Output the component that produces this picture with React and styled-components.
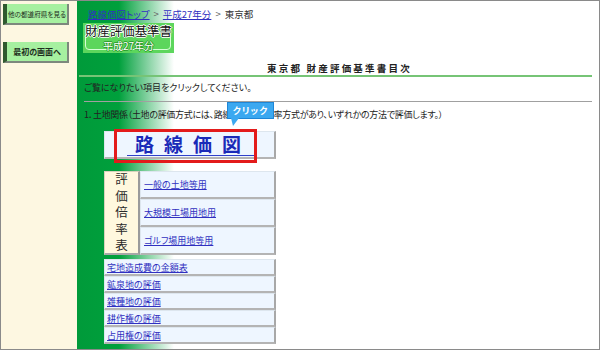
import React from 'react';
import styled, { createGlobalStyle } from 'styled-components';

const GlobalStyle = createGlobalStyle`
  body {
    margin: 0;
    background: #fff;
    font-family: "Noto Sans CJK JP", "Noto Sans", sans-serif;
    font-feature-settings: "palt";
  }
`;

const Frame = styled.div`
  width: 600px;
  height: 350px;
  box-sizing: border-box;
  border: 1px solid #8a8a8a;
  display: flex;
  overflow: hidden;
`;

const Sidebar = styled.div`
  width: 76px;
  background: #fdf7e1;
  display: flex;
  flex-direction: column;
  align-items: flex-start;
  padding: 3px 0 0 2px;
  box-sizing: border-box;
`;

const SideButton = styled.div`
  width: 66px;
  height: 21px;
  box-sizing: border-box;
  margin-top: ${({ $gap }) => $gap || 0}px;
  background: #a6f0a0;
  border-left: 4px solid #2f5a2f;
  border-right: 2px solid #7d887d;
  border-bottom: 2px solid #7d887d;
  display: flex;
  align-items: center;
  justify-content: center;
  color: #1e2e1e;
  font-size: ${({ $size }) => $size}px;
  font-weight: ${({ $bold }) => ($bold ? 700 : 400)};
  white-space: nowrap;
`;

const Main = styled.div`
  flex: 1;
  background: linear-gradient(90deg, #009a3a 0px, #00a03c 42px, #ffffff 97px);
  padding: 0 7px 0 0;
  display: flex;
  flex-direction: column;
  font-size: 9px;
  color: #222;
`;

const Crumbs = styled.div`
  margin: 6px 0 0 11px;
  height: 14px;
  line-height: 14px;
  font-size: 9.5px;
  color: #333;
  display: flex;
  gap: 4px;
`;

const Link = styled.a`
  color: #3030c0;
  text-decoration: underline;
  font-size: ${({ $size }) => $size || 9}px;
  cursor: pointer;
  white-space: nowrap;
`;

const Sep = styled.span`
  color: #666;
`;

const TitleBadge = styled.div`
  margin: 2px 0 0 6px;
  width: 91px;
  height: 30px;
  background: #5cd65c;
  position: relative;
  display: flex;
  flex-direction: column;
  align-items: center;
`;

const TitleFrame = styled.div`
  position: absolute;
  left: 2px;
  right: 3px;
  top: 9px;
  height: 16px;
  border: 1px solid #d6ffd6;
  border-radius: 4px;
`;

const TitleMain = styled.div`
  position: relative;
  font-size: 12.4px;
  line-height: 17px;
  white-space: nowrap;
  color: #111;
  text-shadow: 1px 0 0 #fff, -1px 0 0 #fff, 0 1px 0 #fff, 0 -1px 0 #fff;
`;

const TitleSub = styled.div`
  position: relative;
  font-size: 10px;
  line-height: 11px;
  color: #fff;
  white-space: nowrap;
  text-shadow: 1px 0 0 #2a9a2a, -1px 0 0 #2a9a2a, 0 1px 0 #2a9a2a, 0 -1px 0 #2a9a2a;
`;

const Heading = styled.div`
  margin: 8px 0 0 2px;
  height: 14px;
  line-height: 14px;
  border-bottom: 2px solid #76c476;
  text-align: center;
  font-size: 9.5px;
  font-weight: 700;
  letter-spacing: 2.2px;
  color: #222;
  padding-left: 8px;
`;

const Text = styled.div`
  margin: ${({ $top }) => $top}px 0 0 7px;
  line-height: 14px;
  position: relative;
  white-space: nowrap;
  letter-spacing: ${({ $tight }) => ($tight ? '-0.3px' : 'normal')};
`;

const Rule = styled.div`
  margin: 6px 0 0 7px;
  height: 1px;
  background: #a0a0a0;
`;

const Bubble = styled.div`
  position: absolute;
  left: 143px;
  top: -6px;
  width: 47px;
  height: 17px;
  box-sizing: border-box;
  background: #3ba8f0;
  border: 1px solid #1e86d6;
  color: #fff;
  font-weight: 700;
  font-size: 9px;
  letter-spacing: 1px;
  display: flex;
  align-items: center;
  justify-content: center;

  &::after {
    content: '';
    position: absolute;
    left: 3px;
    bottom: -8px;
    border-top: 8px solid #3ba8f0;
    border-right: 6px solid transparent;
    border-left: 2px solid transparent;
  }
`;

const Block = styled.div`
  margin: ${({ $top }) => $top}px 0 0 27px;
  width: 172px;
`;

const MapBox = styled.div`
  position: relative;
  height: 28px;
  box-sizing: border-box;
  background: #eef6ff;
  border: 1px solid #dde6ee;
  border-right: 2px solid #a8a8a8;
  border-bottom: 2px solid #b4b4b4;
`;

const MapLink = styled.a`
  position: absolute;
  left: 22px;
  top: 1px;
  padding: 0 3px 0 8px;
  font-size: 19px;
  line-height: 22px;
  font-weight: 700;
  letter-spacing: 10px;
  color: #1a2ab8;
  border-bottom: 1px solid #3040c8;
`;

const Highlight = styled.div`
  position: absolute;
  left: 9px;
  top: -3px;
  width: 143px;
  height: 34px;
  box-sizing: border-box;
  border: 3px solid #e31b1b;
`;

const RateTable = styled.div`
  display: grid;
  grid-template-columns: 36px 136px;
  grid-template-rows: repeat(3, 28px);
  height: 85px;
`;

const RateHead = styled.div`
  grid-row: 1 / span 3;
  background: #fff8de;
  box-sizing: border-box;
  border: 1px solid #d8d2bc;
  border-right: 2px solid #9a9a9a;
  border-bottom: 2px solid #a8a8a8;
  display: flex;
  flex-direction: column;
  align-items: center;
  justify-content: center;
  font-size: 12.5px;
  line-height: 16.4px;
  color: #2a2a2a;
`;

const Cell = styled.div`
  box-sizing: border-box;
  background: #eef6ff;
  border: 1px solid #dde6ee;
  border-right: 2px solid #a8a8a8;
  border-bottom: 2px solid #b4b4b4;
  display: flex;
  align-items: center;
  padding-left: 3px;
`;

const Row = styled(Cell)`
  height: 17px;
  padding-left: 2px;
`;

const rateRows = ['一般の土地等用', '大規模工場用地用', 'ゴルフ場用地等用'];
const listRows = ['宅地造成費の金額表', '鉱泉地の評価', '雑種地の評価', '耕作権の評価', '占用権の評価'];

export default function App() {
  return (
    <>
      <GlobalStyle />
      <Frame>
        <Sidebar>
          <SideButton $size={6.6}>他の都道府県を見る</SideButton>
          <SideButton $gap={17} $size={8} $bold>最初の画面へ</SideButton>
        </Sidebar>
        <Main>
          <Crumbs>
            <Link $size={9.5}>路線価図トップ</Link>
            <Sep>&gt;</Sep>
            <Link $size={9.5}>平成27年分</Link>
            <Sep>&gt;</Sep>
            <span>東京都</span>
          </Crumbs>
          <TitleBadge>
            <TitleFrame />
            <TitleMain>財産評価基準書</TitleMain>
            <TitleSub>平成27年分</TitleSub>
          </TitleBadge>
          <Heading>東京都 財産評価基準書目次</Heading>
          <Text $top={4}>ご覧になりたい項目をクリックしてください。</Text>
          <Rule />
          <Text $top={6} $tight>
            1．土地関係（土地の評価方式には、路線価方式と倍率方式があり、いずれかの方法で評価します。）
            <Bubble>クリック</Bubble>
          </Text>
          <Block $top={9}>
            <MapBox>
              <MapLink>路線価図</MapLink>
              <Highlight />
            </MapBox>
          </Block>
          <Block $top={12}>
            <RateTable>
              <RateHead>
                {'評価倍率表'.split('').map((c) => (
                  <span key={c}>{c}</span>
                ))}
              </RateHead>
              {rateRows.map((r) => (
                <Cell key={r}>
                  <Link>{r}</Link>
                </Cell>
              ))}
            </RateTable>
          </Block>
          <Block $top={3}>
            {listRows.map((r) => (
              <Row key={r}>
                <Link>{r}</Link>
              </Row>
            ))}
          </Block>
        </Main>
      </Frame>
    </>
  );
}
